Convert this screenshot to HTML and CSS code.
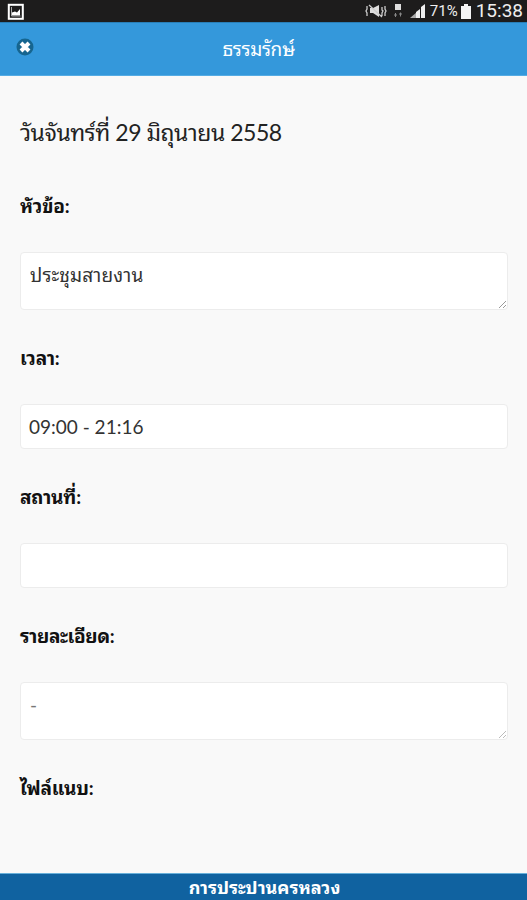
FILE: index.html
```html
<!DOCTYPE html>
<html lang="th">
<head>
<meta charset="utf-8">
<title>ธรรมรักษ์</title>
<link rel="stylesheet" href="styles.css">
</head>
<body>
<div class="status">
  <svg class="picture" width="18" height="18" viewBox="0 0 18 18"><rect x="1.8" y="1.8" width="14" height="14" fill="none" stroke="#fff" stroke-width="2"/><path d="M5 12.500V9.500l3-1 2 1L13 6v6.500z" fill="#fff"/><path d="M4.500 4v9h9" fill="none" stroke="#aaa"/></svg>
  <div class="indicators">
    <svg class="mute" width="22" height="16" viewBox="0 0 22 16"><path d="M5 5h3l6-3v12l-6-4H5z" fill="#ddd"/><path d="M4 2l13 12M2 3v3l-1 2 1 2v3M17 4v3l1 1-1 2v3M20 3v3l1 2-1 2v3" fill="none" stroke="#ccc" stroke-width="1.3"/></svg>
    <svg class="data" width="8" height="16" viewBox="0 0 8 16"><path d="M1 1h6v6H1z" fill="#ddd"/><path d="M0 12h3M1.500 10v4M5 11h3M6.500 9.500v4" stroke="#888" stroke-width="1"/></svg>
    <svg class="signal" width="17" height="16" viewBox="0 0 17 16"><path d="M1 15L8 9v6z" fill="#aaa"/><path d="M7 15V9l4-3v9zM12 15V4l4-3v14z" fill="#eee"/></svg>
    <span class="percent">71%</span>
    <svg class="battery" width="10" height="15" viewBox="0 0 10 15"><path d="M3 0h4v2h3v13H0V2h3z" fill="#f4f4f4"/></svg>
    <span class="clock">15:38</span>
  </div>
</div>
<header class="header">
  <svg class="close" width="20" height="20" viewBox="0 0 20 20"><circle cx="10" cy="10" r="8.500" fill="#16658f"/><path d="M6 6l8 8M14 6l-8 8" stroke="#fff" stroke-width="4"/></svg>
  <h1 class="title">ธรรมรักษ์</h1>
</header>
<main class="content">
  <h2 class="date">วันจันทร์ที่ 29 มิถุนายน 2558</h2>
  <label class="label">หัวข้อ:</label>
  <div class="field area subject">ประชุมสายงาน<svg class="grip" width="9" height="9" viewBox="0 0 9 9"><path d="M1 8l7-7M5 8l3-3" stroke="#999"/></svg></div>
  <label class="label">เวลา:</label>
  <div class="field time">09:00 - 21:16</div>
  <label class="label">สถานที่:</label>
  <div class="field"></div>
  <label class="label detail">รายละเอียด:</label>
  <div class="field area note">-<svg class="grip" width="9" height="9" viewBox="0 0 9 9"><path d="M1 8l7-7M5 8l3-3" stroke="#bbb"/></svg></div>
  <label class="label">ไฟล์แนบ:</label>
</main>
<footer class="footer">การประปานครหลวง</footer>
</body>
</html>
```
FILE: styles.css
```css
* { box-sizing: border-box; }
body { margin: 0; height: 900px; display: flex; flex-direction: column; overflow: hidden; background: #f9f9f9; color: #222; font-family: Lato, "Noto Sans Thai Looped", Loma, Waree, Garuda, Umpush, "Noto Sans Thai", sans-serif; }
.status { flex: 0 0 22px; display: flex; justify-content: space-between; align-items: center; padding: 0 4px 0 7px; background: #1d1c1c; color: #eee; font-family: Roboto, sans-serif; }
.picture { margin-top: 1px; }
.indicators { display: flex; align-items: center; height: 22px; }
.mute { margin-right: 7px; }
.data { margin-right: 7px; }
.signal { margin-right: 4px; }
.percent { font-size: 15px; margin-right: 3px; }
.battery { margin-right: 5px; }
.clock { font-size: 19px; line-height: 22px; }
.header { position: relative; flex: 0 0 54px; display: flex; align-items: center; justify-content: center; background: #3498db; border-top: 1px solid #287eb7; border-bottom: 1px solid #55ace4; color: #fff; }
.close { position: absolute; left: 15px; top: 14px; }
.title { margin: 0 10px 0 0; font-size: 19px; line-height: 30px; font-weight: 400; letter-spacing: -0.3px; }
.content { flex: 1; display: flex; flex-direction: column; padding: 40px 19px 0 20px; }
.date { margin: 0 0 43px; font-size: 23px; line-height: 32px; font-weight: 400; letter-spacing: -0.46px; white-space: nowrap; }
.label { display: block; height: 28px; margin-bottom: 33px; font-size: 19px; line-height: 30px; font-weight: 700; letter-spacing: -0.2px; color: #111; }
.detail { letter-spacing: -0.4px; }
.field { position: relative; height: 45px; margin-bottom: 33px; padding: 8px 9px; background: #fff; border: 1px solid #ececec; border-radius: 4px; font-size: 19px; line-height: 28px; color: #333; }
.area { height: 58px; }
.subject { letter-spacing: 0.15px; }
.time { padding-left: 8px; }
.note { color: #777; }
.grip { position: absolute; right: 0; bottom: 0; }
.footer { flex: 0 0 27px; background: #1062a0; border-top: 1px solid #68b0da; color: #fff; font-size: 18px; line-height: 26px; font-weight: 700; text-align: center; padding-left: 2px; }
```
